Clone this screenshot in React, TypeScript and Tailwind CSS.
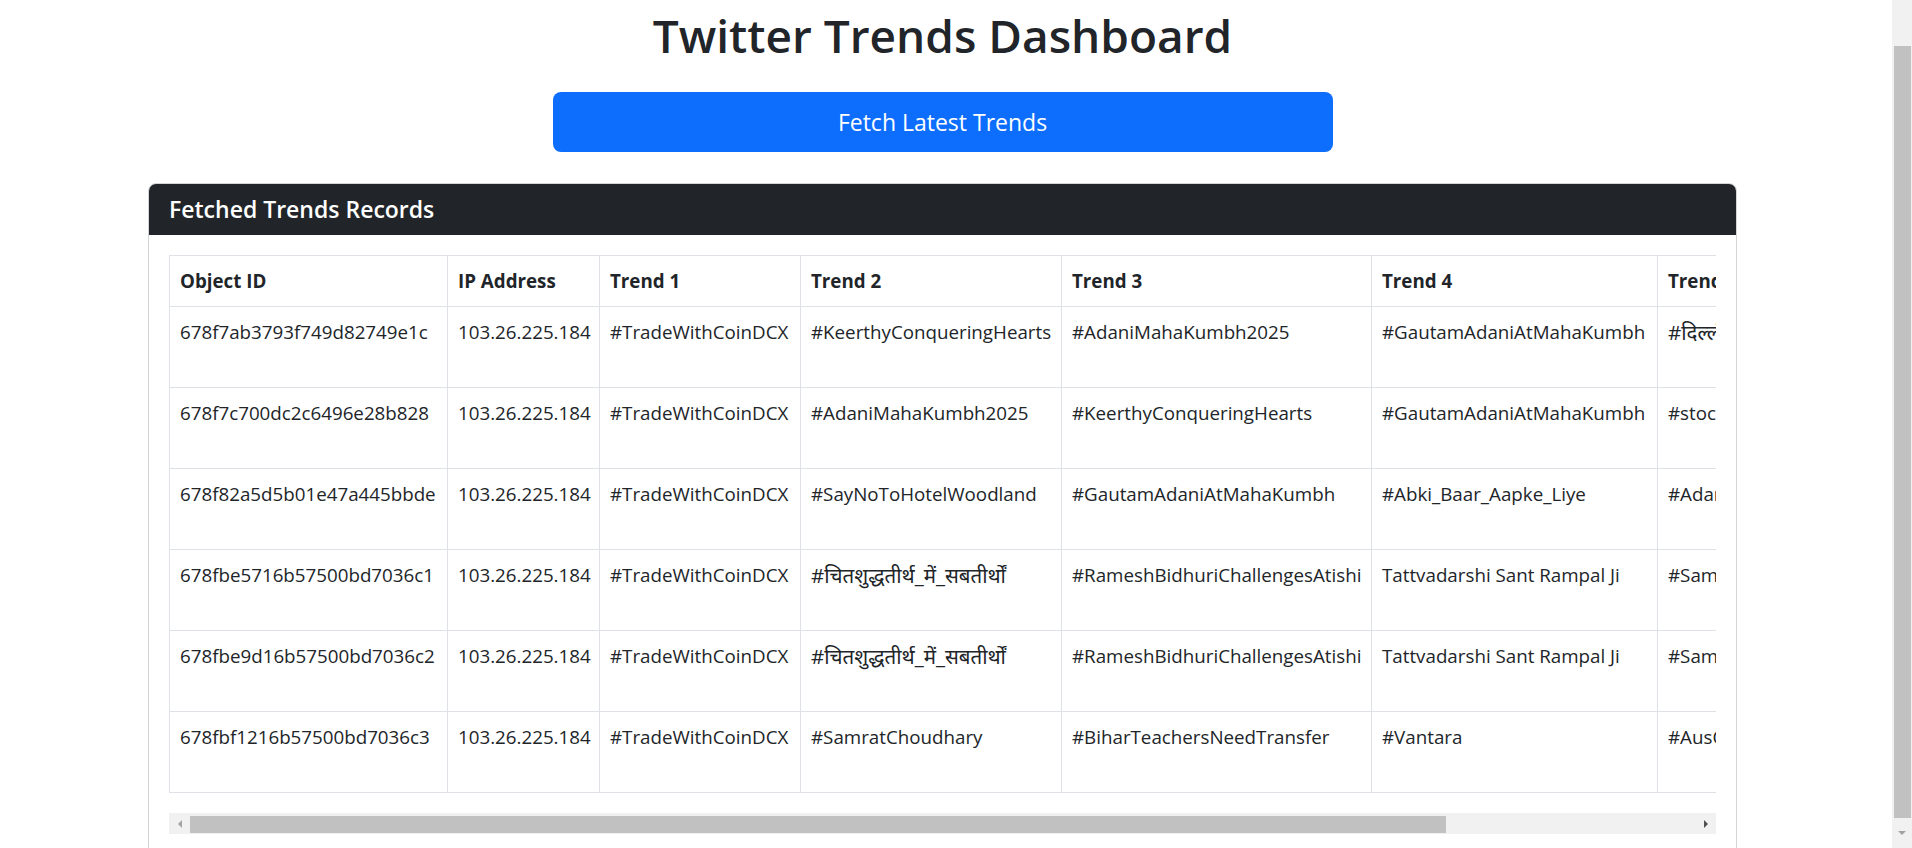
import React from "react";

const rows: string[][] = [
  ["678f7ab3793f749d82749e1c", "103.26.225.184", "#TradeWithCoinDCX", "#KeerthyConqueringHearts", "#AdaniMahaKumbh2025", "#GautamAdaniAtMahaKumbh", "#दिल्ली_चुनाव", "2025-01-21 19:13:47"],
  ["678f7c700dc2c6496e28b828", "103.26.225.184", "#TradeWithCoinDCX", "#AdaniMahaKumbh2025", "#KeerthyConqueringHearts", "#GautamAdaniAtMahaKumbh", "#stockmarketcrash", "2025-01-21 19:20:08"],
  ["678f82a5d5b01e47a445bbde", "103.26.225.184", "#TradeWithCoinDCX", "#SayNoToHotelWoodland", "#GautamAdaniAtMahaKumbh", "#Abki_Baar_Aapke_Liye", "#AdaniMahaKumbh2025", "2025-01-21 19:46:37"],
  ["678fbe5716b57500bd7036c1", "103.26.225.184", "#TradeWithCoinDCX", "#चितशुद्धतीर्थ_में_सबतीर्थों", "#RameshBidhuriChallengesAtishi", "Tattvadarshi Sant Rampal Ji", "#SamratChoudhary", "2025-01-22 00:01:19"],
  ["678fbe9d16b57500bd7036c2", "103.26.225.184", "#TradeWithCoinDCX", "#चितशुद्धतीर्थ_में_सबतीर्थों", "#RameshBidhuriChallengesAtishi", "Tattvadarshi Sant Rampal Ji", "#SamratChoudhary", "2025-01-22 00:02:29"],
  ["678fbf1216b57500bd7036c3", "103.26.225.184", "#TradeWithCoinDCX", "#SamratChoudhary", "#BiharTeachersNeedTransfer", "#Vantara", "#AusOpen", "2025-01-22 00:04:26"],
];

const headers = ["Object ID", "IP Address", "Trend 1", "Trend 2", "Trend 3", "Trend 4", "Trend 5", "Timestamp"];

const isDeva = (s: string) => /[\u0900-\u097F]/.test(s);

export default function App() {
  return (
    <div className="flex h-[848px] overflow-hidden bg-white text-[#212529] font-['Open_Sans','Noto_Sans',sans-serif]">
      {/* page content */}
      <div className="min-w-0 flex-1">
        <div className="ml-[148px] w-[1589px] pb-[10px]">
          <h1 className="pt-[5px] text-center text-[46px] leading-[60px] font-semibold">
            Twitter Trends Dashboard
          </h1>
          <div className="mt-[27px] flex justify-center">
            <button className="h-[60px] w-[780px] rounded-[8px] bg-[#0d6efd] text-[23px] leading-[36px] text-white">
              Fetch Latest Trends
            </button>
          </div>
          <div className="mt-[31px] rounded-[8px] border border-[#d3d4d5] bg-white">
            <div className="rounded-t-[7px] border-b border-[#212529] bg-[#212529] px-[20px] py-[10px]">
              <h5 className="text-[23px] leading-[30px] font-semibold text-white">Fetched Trends Records</h5>
            </div>
            <div className="p-[20px]">
              <div className="overflow-hidden">
                <table className="mb-[20px] w-[1856px] table-fixed border-collapse text-[18.75px] leading-[30px]">
                  <colgroup>
                    <col className="w-[278px]" />
                    <col className="w-[152px]" />
                    <col className="w-[201px]" />
                    <col className="w-[261px]" />
                    <col className="w-[310px]" />
                    <col className="w-[286px]" />
                    <col className="w-[200px]" />
                    <col className="w-[168px]" />
                  </colgroup>
                  <thead>
                    <tr>
                      {headers.map((h) => (
                        <th
                          key={h}
                          className="overflow-hidden whitespace-nowrap border border-[#dee2e6] px-[10px] py-[10px] text-left align-top font-bold"
                        >
                          {h}
                        </th>
                      ))}
                    </tr>
                  </thead>
                  <tbody>
                    {rows.map((r) => (
                      <tr key={r[0]} className="h-[81px]">
                        {r.map((c, i) => (
                          <td
                            key={i}
                            className={
                              i === 7
                                ? "whitespace-normal border border-[#dee2e6] px-[10px] py-[10px] align-top"
                                : "overflow-hidden whitespace-nowrap border border-[#dee2e6] px-[10px] py-[10px] align-top"
                            }
                          >
                            {isDeva(c) ? <span className="text-[20.5px]">{c}</span> : c}
                          </td>
                        ))}
                      </tr>
                    ))}
                  </tbody>
                </table>
              </div>
              {/* horizontal scrollbar of the table */}
              <div className="flex h-[21px] items-center bg-[#f1f1f1]">
                <div className="flex h-full w-[21px] items-center justify-center">
                  <div className="h-0 w-0 border-y-[4px] border-r-[4px] border-y-transparent border-r-[#a3a3a3]" />
                </div>
                <div className="mt-[1px] h-[17px] w-[1256px] bg-[#c1c1c1]" />
                <div className="flex-1" />
                <div className="flex h-full w-[21px] items-center justify-center">
                  <div className="h-0 w-0 border-y-[4px] border-l-[4px] border-y-transparent border-l-[#505050]" />
                </div>
              </div>
            </div>
          </div>
        </div>
      </div>
      {/* page vertical scrollbar */}
      <div className="flex h-full w-[20px] shrink-0 flex-col bg-[#f1f1f1]">
        <div className="h-[46px]" />
        <div className="ml-[2px] mr-[1px] h-[772px] bg-[#c1c1c1]" />
        <div className="flex flex-1 items-center justify-center">
          <div className="h-0 w-0 border-x-[4px] border-t-[4px] border-x-transparent border-t-[#a3a3a3]" />
        </div>
      </div>
    </div>
  );
}
